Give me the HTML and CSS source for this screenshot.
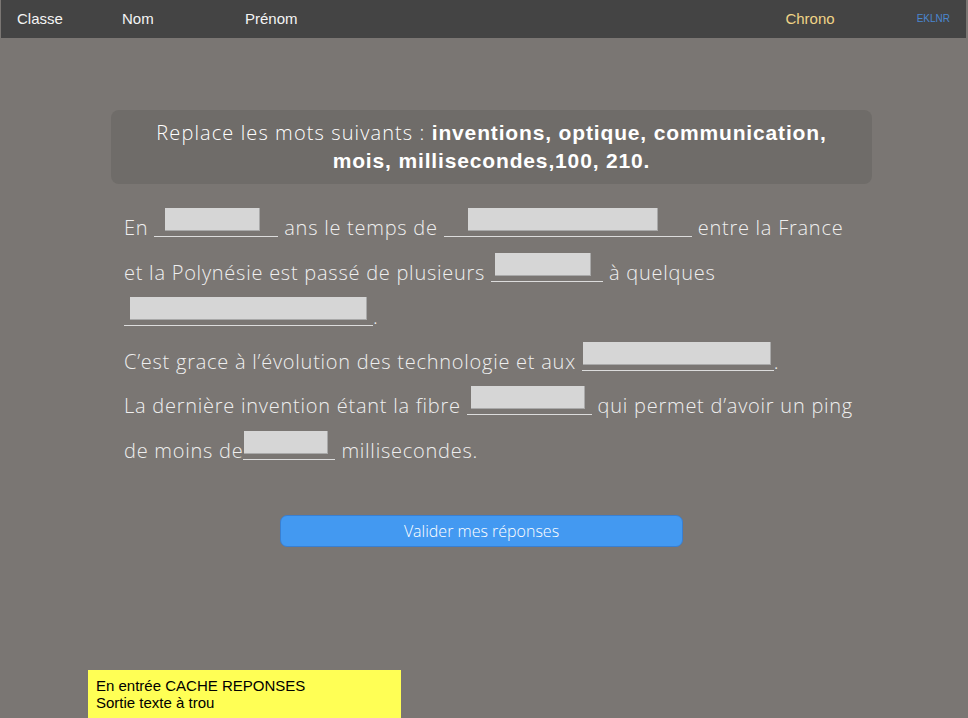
FILE: index.html
```html
<html>

<head>
  <title>Texte à trou</title>
  <meta name="viewport" content="width=device-width, initial-scale=1">
  <link rel="stylesheet" href="styles.css">
</head>

<body>
  <div class="topBar">
    <span class="barItem classe">Classe</span>
    <span class="barItem nom">Nom</span>
    <span class="barItem prenom">Prénom</span>
    <span class="barItem chrono">Chrono</span>
    <span class="barItem code">EKLNR</span>
  </div>

  <div class="main">
    <div class="consigne">
      Replace les mots suivants : <b>inventions, optique, communication,<br />mois, millisecondes,100, 210.</b>
    </div>

    <p class="texte">
      En <span class="blank b1"><span class="box"></span></span> ans le temps de <span class="blank b2"><span class="box"></span></span> entre la France<br />
      et la Polynésie est passé de plusieurs <span class="blank b3"><span class="box"></span></span> à quelques<br />
      <span class="blank b4"><span class="box"></span></span>.<br />
      C’est grace à l’évolution des technologie et aux <span class="blank b5"><span class="box"></span></span>.<br />
      La dernière invention étant la fibre <span class="blank b6"><span class="box"></span></span> qui permet d’avoir un ping<br />
      de moins de<span class="blank b7"><span class="box"></span></span> millisecondes.
    </p>

    <button class="valider">Valider mes réponses</button>
  </div>

  <div class="note">
    En entrée CACHE REPONSES<br />
    Sortie texte à trou
  </div>
</body>

</html>
```

FILE: styles.css
```css
body {
  margin: 0;
  background-color: #7a7673;
  color: #f2f2f2;
  font-family: "Liberation Sans", Arial, sans-serif;
  overflow: hidden;
}

.topBar {
  display: flex;
  align-items: center;
  height: 36px;
  padding-bottom: 2px;
  margin: 0 2px 0 1px;
  background-color: #444444;
  font-size: 15px;
  color: #f4f4f4;
}

.barItem {
  display: block;
}

.classe {
  margin-left: 16px;
  width: 105px;
}

.nom {
  width: 123px;
}

.chrono {
  margin-left: auto;
  margin-right: 82px;
  color: #f0d487;
}

.code {
  margin-right: 16px;
  font-size: 10px;
  color: #4a86d0;
}

.main {
  margin-left: 111px;
  width: 761px;
}

.consigne {
  margin-top: 72px;
  padding: 9px 10px;
  border-radius: 8px;
  background-color: #6f6c69;
  text-align: center;
  font-family: "Open Sans", "Liberation Sans", sans-serif;
  font-weight: 300;
  font-size: 20px;
  letter-spacing: 1.1px;
  line-height: 28px;
  color: #ffffff;
}

.consigne b {
  font-family: "Liberation Sans", Arial, sans-serif;
  font-weight: 700;
  font-size: 21px;
  letter-spacing: 0.85px;
}

.texte {
  margin: 22px 0 0 13px;
  font-family: "Open Sans", "Liberation Sans", sans-serif;
  font-weight: 300;
  font-size: 20px;
  letter-spacing: 0.75px;
  line-height: 44.5px;
  color: #efefef;
}

.blank {
  display: inline-block;
  border-bottom: 1px solid #dcdcdc;
  padding-bottom: 5px;
  margin-bottom: -2px;
  line-height: 0;
}

.box {
  display: block;
  height: 22px;
  background-color: #d6d6d6;
  border-right: 1px solid #a9a9a9;
  border-bottom: 1px solid #a9a9a9;
}

.b1 { padding-left: 11px; padding-right: 18px; }
.b1 .box { width: 94px; }
.b2 { padding-left: 24px; padding-right: 34px; }
.b2 .box { width: 189px; }
.b3 { padding-left: 4px; padding-right: 12px; }
.b3 .box { width: 95px; }
.b4 { padding-left: 6px; padding-right: 6px; }
.b4 .box { width: 236px; }
.b5 { padding-left: 1px; padding-right: 3px; }
.b5 .box { width: 187px; }
.b6 { padding-left: 4px; padding-right: 7px; }
.b6 .box { width: 113px; }
.b7 { padding-left: 1px; padding-right: 7px; }
.b7 .box { width: 83px; }

.valider {
  display: block;
  margin: 42px 0 0 169px;
  width: 403px;
  height: 32px;
  border: 1px solid #3a7fd0;
  border-radius: 7px;
  background-color: #4399f1;
  color: #ffffff;
  font-family: "Open Sans", "Liberation Sans", sans-serif;
  font-weight: 300;
  font-size: 16px;
  cursor: pointer;
}

.note {
  margin: 123px 0 0 88px;
  width: 297px;
  height: 40px;
  padding: 7px 8px;
  background-color: #ffff55;
  color: #000000;
  font-size: 15px;
  line-height: 17px;
}
```
